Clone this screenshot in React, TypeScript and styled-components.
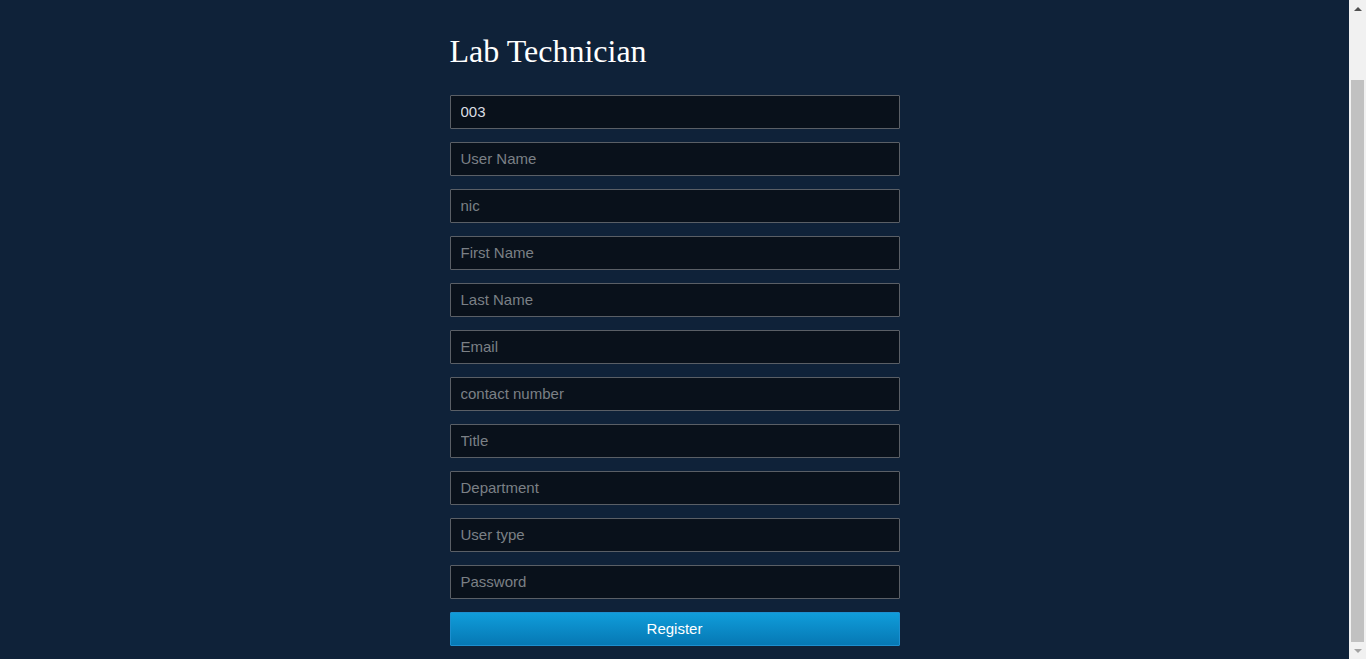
import React from "react";
import styled, { createGlobalStyle } from "styled-components";

const GlobalStyle = createGlobalStyle`
  html, body {
    margin: 0;
    padding: 0;
    background-color: #0f2239;
    overflow: hidden;
  }
  body {
    font-family: "Liberation Sans", Arial, sans-serif;
  }
`;

const Page = styled.div`
  min-height: 659px;
  display: flex;
  justify-content: center;
  padding: 34px 17px 0 0;
  box-sizing: border-box;
`;

const FormBox = styled.div`
  width: 450px;

  h1 {
    font-family: "Liberation Serif", "Times New Roman", serif;
    font-weight: normal;
    font-size: 32px;
    color: #ffffff;
    margin: 0 0 26px 0;
    line-height: 35px;
  }

  form {
    display: flex;
    flex-direction: column;
    gap: 13px;
  }
`;

const Field = styled.input`
  height: 34px;
  box-sizing: border-box;
  width: 100%;
  padding: 0 10px 2px 10px;
  font-family: "Liberation Sans", Arial, sans-serif;
  font-size: 15px;
  color: #d9dde2;
  background-color: #09111b;
  border: 1px solid #5a5f66;
  border-radius: 1px;
  outline: none;

  &::placeholder {
    color: #7b8086;
  }
`;

const RegisterButton = styled.button`
  height: 34px;
  width: 100%;
  padding: 0 0 2px 0;
  font-family: "Liberation Sans", Arial, sans-serif;
  font-size: 15px;
  color: #ffffff;
  background: linear-gradient(to bottom, #109dda, #0678b4);
  border: 1px solid #1d8fcf;
  border-radius: 1px;
  cursor: pointer;
`;

/* window scrollbar, as it shows in the screenshot */
const ScrollTrack = styled.div`
  position: fixed;
  top: 0;
  right: 0;
  width: 17px;
  height: 100vh;
  background: #f1f1f1;
  display: flex;
  flex-direction: column;
  align-items: center;
`;

const Arrow = styled.div<{ $down?: boolean }>`
  height: 17px;
  width: 17px;
  display: flex;
  align-items: center;
  justify-content: center;
  flex-shrink: 0;

  &::before {
    content: "";
    border-left: 4px solid transparent;
    border-right: 4px solid transparent;
    ${(p) =>
      p.$down
        ? "border-top: 4px solid #a3a3a3;"
        : "border-bottom: 4px solid #505050;"}
  }
`;

const TrackBody = styled.div`
  flex: 1;
  width: 100%;
  padding-top: 63px;
  box-sizing: border-box;
  display: flex;
`;

const Thumb = styled.div`
  flex: 1;
  margin: 0 2px;
  background: #c1c1c1;
`;

const fields = [
  { placeholder: "", value: "003" },
  { placeholder: "User Name" },
  { placeholder: "nic" },
  { placeholder: "First Name" },
  { placeholder: "Last Name" },
  { placeholder: "Email" },
  { placeholder: "contact number" },
  { placeholder: "Title" },
  { placeholder: "Department" },
  { placeholder: "User type" },
  { placeholder: "Password", type: "password" },
];

const App = () => {
  return (
    <>
      <GlobalStyle />
      <Page>
        <FormBox>
          <h1>Lab Technician</h1>
          <form onSubmit={(e) => e.preventDefault()}>
            {fields.map((f, i) => (
              <Field
                key={i}
                type={f.type || "text"}
                placeholder={f.placeholder}
                defaultValue={f.value}
              />
            ))}
            <RegisterButton type="submit">Register</RegisterButton>
          </form>
        </FormBox>
      </Page>
      <ScrollTrack>
        <Arrow />
        <TrackBody>
          <Thumb />
        </TrackBody>
        <Arrow $down />
      </ScrollTrack>
    </>
  );
};

export default App;
